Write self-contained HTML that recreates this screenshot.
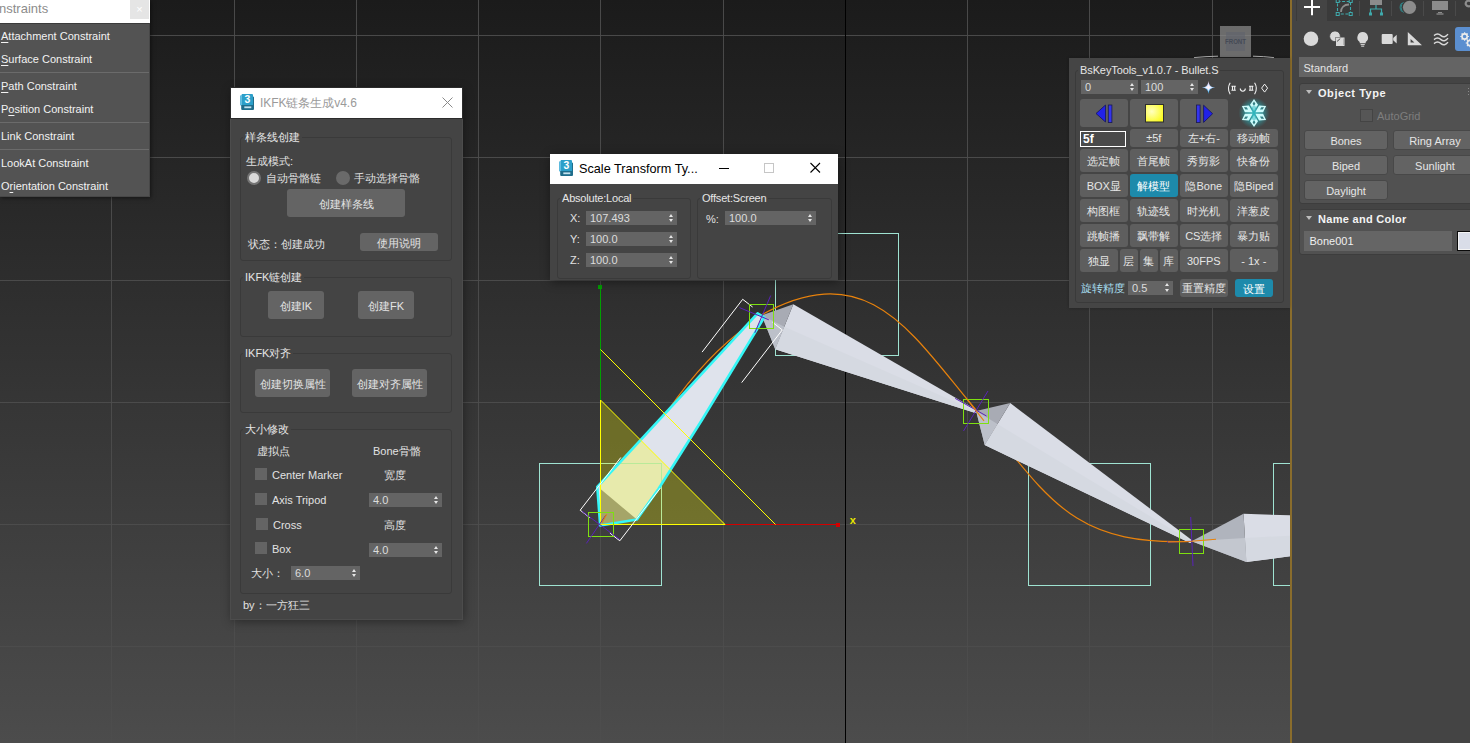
<!DOCTYPE html>
<html lang="en">
<head>
<meta charset="utf-8">
<title>3ds Max - IKFK</title>
<style>
html,body{margin:0;padding:0;}
body{width:1470px;height:743px;overflow:hidden;position:relative;background:#444444;font-family:"Liberation Sans",sans-serif;font-size:11px;color:#e2e2e2;}
*{box-sizing:border-box;}
.abs{position:absolute;}
#vp{position:absolute;left:0;top:0;width:1290px;height:743px;background:linear-gradient(to bottom,#1b1b1b 0%,#4c4c4c 100%);overflow:hidden;}
#vp svg{position:absolute;left:0;top:0;}
#goldline{position:absolute;left:1290px;top:0;width:2px;height:743px;background:#8a6d2c;}
/* ---------- generic widgets ---------- */
.t{position:absolute;white-space:nowrap;line-height:14px;height:14px;}
.btn{position:absolute;background:#646464;border-radius:3px;color:#e4e4e4;text-align:center;white-space:nowrap;}
.grp{position:absolute;border:1px solid #3a3a3a;border-radius:3px;}
.grp>.gt{position:absolute;top:-8px;left:2px;background:#444444;padding:0 2px;line-height:14px;height:14px;white-space:nowrap;color:#e6e6e6;}
.spin{position:absolute;background:#646464;color:#dcdcdc;height:14px;line-height:14px;padding-left:4px;white-space:nowrap;}
.spin:before{content:"";position:absolute;right:3.6px;top:2.6px;border-left:2.8px solid transparent;border-right:2.8px solid transparent;border-bottom:3.4px solid #e6e6e6;}
.spin:after{content:"";position:absolute;right:3.6px;bottom:2.6px;border-left:2.8px solid transparent;border-right:2.8px solid transparent;border-top:3.4px solid #e6e6e6;}
.chk{position:absolute;width:12px;height:12px;background:#646464;}
/* ---------- windows ---------- */
.win{position:absolute;background:#444444;box-shadow:1px 2px 10px 0 rgba(0,0,0,.42);}
.win .tb{position:absolute;left:0;top:0;right:0;background:#ffffff;}

/* constraints menu */
#cm{position:absolute;left:0;top:0;width:150px;height:197px;box-shadow:1px 1px 4px rgba(0,0,0,.5);}
#cm .tb{position:absolute;left:0;top:0;width:150px;height:23px;background:#fff;}
#cm .tb .ti{position:absolute;left:-1px;top:1px;font-size:13px;line-height:15px;color:#8c8c8c;white-space:nowrap;}
#cm .tb .cl{position:absolute;left:130px;top:0;width:19px;height:19px;background:#e5e5e5;color:#fff;font-size:11px;line-height:18px;text-align:center;}
#cm .bd{position:absolute;left:0;top:23px;width:150px;height:174px;background:#535353;border-top:1px solid #3b3b3b;border-right:1px solid #474747;border-bottom:1px solid #474747;}
#cm .it{position:absolute;left:1px;height:14px;line-height:14px;font-size:11px;color:#f2f2f2;white-space:nowrap;}
#cm .it u{text-decoration:underline;text-underline-offset:1.5px;}
#cm .sp{position:absolute;left:0;width:149px;height:1px;background:#6b6b6b;}
/* IKFK window */
#ik{left:231px;top:88px;width:231px;height:531px;outline:1px solid #4c4c4c;}
#ik .tb{outline:1px solid #2c2c2c;}
#ik .tb{height:30px;}
#ik .ttl{position:absolute;left:29px;top:7px;font-size:12px;letter-spacing:-0.05px;line-height:16px;color:#9a9a9a;white-space:nowrap;}
.ico3{position:absolute;width:14px;height:16px;}
.cj{font-size:11px;}
.radio{position:absolute;width:14px;height:14px;border-radius:50%;background:#6a6a6a;}
.radio.on{background:#dadada;border:2.5px solid #747474;}

/* Scale transform */
#st{left:550px;top:154px;width:288px;height:126px;}
#st .tb{height:30px;}
#st .ttl{position:absolute;left:29px;top:7px;font-size:12.7px;line-height:16px;color:#000;white-space:nowrap;}
/* BsKeyTools */
#bk{position:absolute;left:1069px;top:58px;width:221px;height:250px;background:#454545;box-shadow:0 0 3px 0 rgba(0,0,0,.25);}
#bk .grp>.gt{background:#454545;}
#bk .b{position:absolute;background:#5e5e5e;border-radius:3px;color:#e6e6e6;text-align:center;white-space:nowrap;font-size:11px;height:22.5px;line-height:24px;width:47.6px;}
#bk .b.teal{background:#1d8aab;color:#fff;}
/* Command panel */
#cp{position:absolute;left:1292px;top:0;width:178px;height:743px;background:#444444;overflow:hidden;}
#cp .roll{position:absolute;left:7px;width:180px;background:#515151;border-radius:3px;border:1px solid #3d3d3d;}
#cp .rh{position:absolute;left:18px;font-weight:700;font-size:11px;line-height:14px;color:#f4f4f4;white-space:nowrap;}
#cp .tri{position:absolute;left:4px;width:0;height:0;border-left:3px solid transparent;border-right:3px solid transparent;border-top:4.5px solid #bdbdbd;}
#cp .pb{position:absolute;background:#636363;border:1px solid #484848;border-radius:3px;height:20px;line-height:20.5px;text-align:center;color:#e6e6e6;font-size:11px;white-space:nowrap;}
</style>
</head>
<body>

<!-- ======================= VIEWPORT ======================= -->
<div id="vp">
<svg width="1290" height="743" viewBox="0 0 1290 743" shape-rendering="auto">
  <!-- grid -->
  <g stroke="#4d4d4d" stroke-opacity="0.92" stroke-width="1" shape-rendering="crispEdges">
    <line x1="111.5" y1="0" x2="111.5" y2="743"/>
    <line x1="234.5" y1="0" x2="234.5" y2="743"/>
    <line x1="356.5" y1="0" x2="356.5" y2="743"/>
    <line x1="478.5" y1="0" x2="478.5" y2="743"/>
    <line x1="600.5" y1="0" x2="600.5" y2="743"/>
    <line x1="723.5" y1="0" x2="723.5" y2="743"/>
    <line x1="967.5" y1="0" x2="967.5" y2="743"/>
    <line x1="1089.5" y1="0" x2="1089.5" y2="743"/>
    <line x1="1212.5" y1="0" x2="1212.5" y2="743"/>
    <line x1="0" y1="35.5" x2="1290" y2="35.5"/>
    <line x1="0" y1="157.5" x2="1290" y2="157.5"/>
    <line x1="0" y1="280.5" x2="1290" y2="280.5"/>
    <line x1="0" y1="402.5" x2="1290" y2="402.5"/>
    <line x1="0" y1="524.5" x2="1290" y2="524.5"/>
    <line x1="0" y1="646.5" x2="1290" y2="646.5"/>
  </g>
  <line x1="845.5" y1="0" x2="845.5" y2="743" stroke="#000" stroke-width="1" shape-rendering="crispEdges"/>

  <!-- view cube -->
  <rect x="1220" y="26" width="31" height="31" fill="#8a8a8a" fill-opacity="0.72"/>
  <rect x="1226" y="32" width="19" height="19" fill="#5f636c" fill-opacity="0.6"/>
  <text x="1235.5" y="44" font-family="Liberation Sans, sans-serif" font-size="6.5" font-weight="700" fill="#454a55" text-anchor="middle" textLength="21" lengthAdjust="spacingAndGlyphs">FRONT</text>

  <path d="M1194,57.6 Q1206,56.4 1218,56.2 M1253,56.2 Q1264,56.4 1274,57.6" stroke="#b0b0b0" stroke-width="1" fill="none"/>
  <!-- helper squares (teal) -->
  <g fill="none" stroke="#9fe3d2" stroke-width="1" shape-rendering="crispEdges">
    <rect x="775.5" y="233.5" width="123" height="122"/>
    <rect x="1028.5" y="463.5" width="122" height="122"/>
    <rect x="1273.5" y="463.5" width="122" height="122"/>
  </g>

  <!-- spline (orange) -->
  <g fill="none" stroke="#e8820c" stroke-width="1.2">
    <path d="M600.5,524.5 C645.3,446.2 683.6,366.0 761.5,316.2"/>
    <path d="M761.7,314.8 C869.3,255.0 912.6,335.1 977.0,411.2"/>
    <path d="M977.0,411.2 C1048.8,497.4 1069.9,545.8 1191.6,541.3 L1216,539.3"/>
  </g>

  <!-- bone 2 -->
  <polygon points="793.3,304.3 775.2,349.3 975.4,413.0 977.2,411.4 976.4,409.8" fill="#dadde6"/>
  <polygon points="784.3,326.8 775.2,349.3 975.4,413.0 977,411.4" fill="#d5d9e1"/>
  <polygon points="761.7,315.3 793.3,304.3 775.2,349.3" fill="#a8abb4"/>
  <polygon points="761.7,315.3 784.3,326.8 775.2,349.3" fill="#bcc0c9"/>
  <!-- bone 3 -->
  <polygon points="1010.2,403.1 984.7,445.1 1190.2,542.9 1191.9,541.4 1191.4,539.8" fill="#dadde6"/>
  <polygon points="997.5,424.1 984.7,445.1 1190.2,542.9 1191.7,541.4" fill="#d5d9e1"/>
  <polygon points="976.1,411.1 1010.2,403.1 984.7,445.1" fill="#a8abb4"/>
  <polygon points="976.1,411.1 997.5,424.1 984.7,445.1" fill="#bcc0c9"/>
  <!-- bone 4 -->
  <polygon points="1243.5,513.8 1246.4,562.1 1290,556.2 1290,515.3" fill="#dadde6"/>
  <polygon points="1245,538 1246.4,562.1 1290,556.2 1290,535.7" fill="#d5d9e1"/>
  <polygon points="1191.6,541.3 1243.5,513.8 1246.4,562.1" fill="#b0b4bd"/>
  <polygon points="1191.6,541.3 1245,538 1246.4,562.1" fill="#c3c7cf"/>

  <!-- bone 1 (selected) -->
  <polygon points="600.2,525.5 597.3,486.9 757.6,313.4 764.2,317.4 701.9,420 658.6,488.8 636.9,519.5" fill="#dfe3ec"/>
  <polygon points="600.5,489 636.9,519.5 600.2,525.5" fill="#84848f"/>
  <rect x="539.5" y="463.5" width="122" height="122" fill="none" stroke="#9fe3d2" stroke-width="1" shape-rendering="crispEdges"/>
  <!-- scale gizmo plane -->
  <polygon points="600.5,400 600.5,524.2 725,524.2" fill="#ffff00" fill-opacity="0.27"/>
  <polygon points="600.2,525.5 597.3,486.9 757.6,313.4 764.2,317.4 701.9,420 658.6,488.8 636.9,519.5" fill="none" stroke="#35f6f6" stroke-width="2.6" stroke-linejoin="round"/>
  <!-- gizmo lines -->
  <g stroke-width="1" shape-rendering="crispEdges" fill="none">
    <line x1="600.5" y1="287" x2="600.5" y2="400" stroke="#00a000"/>
    <line x1="600.5" y1="400" x2="600.5" y2="524.5" stroke="#ffff00"/>
    <line x1="600.5" y1="524.5" x2="725" y2="524.5" stroke="#ffff00"/>
    <line x1="725" y1="524.5" x2="838" y2="524.5" stroke="#d40000"/>
  </g>
  <g stroke="#ffff00" stroke-width="1" fill="none">
    <line x1="600.5" y1="400" x2="725" y2="524.5"/>
    <line x1="600.5" y1="349.5" x2="775.5" y2="524.5"/>
  </g>
  <rect x="598" y="285" width="4" height="4" fill="#00a000"/>
  <rect x="836" y="523" width="4" height="4" fill="#d40000"/>
  <text x="849.8" y="524.2" font-family="Liberation Sans, sans-serif" font-size="11" font-weight="700" fill="#e6e600">x</text>

  <!-- selection brackets -->
  <g fill="none" stroke="#ffffff" stroke-width="1">
    <polyline points="620.8,457.5 580.2,510.2 590.1,517.9"/>
    <polyline points="660.4,488.0 619.8,540.8 609.9,533.1"/>
    <polyline points="702.1,352.1 742.7,299.3 752.6,307.0"/>
    <polyline points="741.7,382.6 782.3,329.9 772.4,322.2"/>
  </g>

  <!-- joint markers -->
  <g fill="none" stroke="#7ee010" stroke-width="1.4" shape-rendering="crispEdges">
    <rect x="588.5" y="512.5" width="25" height="24"/>
    <rect x="749.5" y="304.5" width="24" height="24"/>
    <rect x="963.5" y="399.5" width="25" height="24"/>
    <rect x="1179.5" y="529.5" width="24" height="24"/>
  </g>
  <g fill="none" stroke="#5a22b8" stroke-width="1">
    <line x1="582.3" y1="511.4" x2="620" y2="539.7"/>
    <line x1="586.4" y1="543.4" x2="605.8" y2="515.2"/>
    <line x1="739.5" y1="307.6" x2="768.8" y2="319.8"/>
    <line x1="770.7" y1="295.5" x2="754.8" y2="332.8"/>
    <line x1="955.2" y1="398.4" x2="986.5" y2="416"/>
    <line x1="988" y1="391" x2="963.5" y2="431"/>
    <line x1="1190.7" y1="517" x2="1193" y2="566"/>
    <line x1="1167" y1="542" x2="1192" y2="541.3"/>
  </g>
  <g fill="none" stroke="#e8820c" stroke-width="1.1">
    <line x1="602" y1="522.7" x2="606.7" y2="514.2"/>
    <line x1="966" y1="398" x2="984" y2="420.9"/>
    <path d="M1168,541.9 L1191.6,541.3 L1216,539.3"/>
  </g>
</svg>
</div>
<div id="goldline"></div>


<!-- ======================= CONSTRAINTS MENU ======================= -->
<div id="cm">
  <div class="bd"></div>
  <div class="tb"><div class="ti">nstraints</div><div class="cl">&#215;</div></div>
  <div class="it" style="top:29px"><u>A</u>ttachment Constraint</div>
  <div class="it" style="top:52px"><u>S</u>urface Constraint</div>
  <div class="sp" style="top:72px"></div>
  <div class="it" style="top:79px"><u>P</u>ath Constraint</div>
  <div class="it" style="top:102px">P<u>o</u>sition Constraint</div>
  <div class="sp" style="top:122px"></div>
  <div class="it" style="top:129px">Link Constraint</div>
  <div class="sp" style="top:149px"></div>
  <div class="it" style="top:156px">LookAt Constraint</div>
  <div class="it" style="top:179px">O<u>r</u>ientation Constraint</div>
</div>

<!-- ======================= IKFK WINDOW ======================= -->
<div id="ik" class="win">
  <div class="tb">
    <svg class="ico3" style="left:9px;top:6px" viewBox="0 0 14 16"><path d="M1.9,0.5 L0,1.7 V11.2 L1.9,11.7 Z" fill="#5dbade"/><path d="M13,2.3 L14,3.2 V15 Q14,16 13,16 H2.2 Q1.2,16 1.2,15 V11 H13 Z" fill="#1f6d8b"/><path d="M1.9,0 H12 Q13,0 13,1 V11 H1.9 Z" fill="#2c9fc9"/><text x="7.5" y="9.3" font-family="Liberation Sans, sans-serif" font-weight="700" font-size="10.4" fill="#fff" text-anchor="middle">3</text><rect x="4.3" y="12.4" width="7" height="1.8" fill="#c4e2ee"/></svg>
    <div class="ttl">IKFK链条生成v4.6</div>
    <svg style="position:absolute;left:211px;top:9px" width="11" height="11" viewBox="0 0 11 11"><path d="M0.5,0.5 L10.5,10.5 M10.5,0.5 L0.5,10.5" stroke="#8a8a8a" stroke-width="1" fill="none"/></svg>
  </div>
  <!-- group 1 -->
  <div class="grp" style="left:9px;top:49px;width:212px;height:124px"><div class="gt cj">样条线创建</div></div>
  <div class="t cj" style="left:15px;top:66px">生成模式:</div>
  <div class="radio on" style="left:15.8px;top:83.3px"></div>
  <div class="t cj" style="left:35px;top:83px">自动骨骼链</div>
  <div class="radio" style="left:104.5px;top:83.3px"></div>
  <div class="t cj" style="left:123px;top:83px">手动选择骨骼</div>
  <div class="btn cj" style="left:56px;top:101px;width:118px;height:28px;line-height:30px">创建样条线</div>
  <div class="t cj" style="left:17px;top:149px">状态：创建成功</div>
  <div class="btn cj" style="left:129px;top:145px;width:78px;height:18px;line-height:20.5px">使用说明</div>
  <!-- group 2 -->
  <div class="grp" style="left:9px;top:189px;width:212px;height:60px"><div class="gt cj">IKFK链创建</div></div>
  <div class="btn cj" style="left:37px;top:203px;width:56px;height:28px;line-height:30px">创建IK</div>
  <div class="btn cj" style="left:127px;top:203px;width:56px;height:28px;line-height:30px">创建FK</div>
  <!-- group 3 -->
  <div class="grp" style="left:9px;top:265px;width:212px;height:60px"><div class="gt cj">IKFK对齐</div></div>
  <div class="btn cj" style="left:24px;top:281px;width:75px;height:28px;line-height:30px">创建切换属性</div>
  <div class="btn cj" style="left:121px;top:281px;width:75px;height:28px;line-height:30px">创建对齐属性</div>
  <!-- group 4 -->
  <div class="grp" style="left:9px;top:341px;width:212px;height:165px"><div class="gt cj">大小修改</div></div>
  <div class="t cj" style="left:26px;top:356px">虚拟点</div>
  <div class="t cj" style="left:142px;top:356px">Bone骨骼</div>
  <div class="chk" style="left:24px;top:380px"></div><div class="t" style="left:41px;top:380px">Center Marker</div>
  <div class="t cj" style="left:153px;top:380px">宽度</div>
  <div class="chk" style="left:24px;top:405px"></div><div class="t" style="left:41px;top:405px">Axis Tripod</div>
  <div class="spin" style="left:138px;top:405px;width:73px">4.0</div>
  <div class="chk" style="left:25px;top:430px"></div><div class="t" style="left:42px;top:430px">Cross</div>
  <div class="t cj" style="left:153px;top:430px">高度</div>
  <div class="chk" style="left:24px;top:454px"></div><div class="t" style="left:41px;top:454px">Box</div>
  <div class="spin" style="left:138px;top:455px;width:73px">4.0</div>
  <div class="t cj" style="left:20px;top:478px">大小：</div>
  <div class="spin" style="left:60px;top:478px;width:69px">6.0</div>
  <div class="t cj" style="left:12px;top:510px">by：一方狂三</div>
</div>

<!-- ======================= SCALE TRANSFORM TYPE-IN ======================= -->
<div id="st" class="win">
  <div class="tb">
    <svg class="ico3" style="left:9px;top:6px" viewBox="0 0 14 16"><path d="M1.9,0.5 L0,1.7 V11.2 L1.9,11.7 Z" fill="#5dbade"/><path d="M13,2.3 L14,3.2 V15 Q14,16 13,16 H2.2 Q1.2,16 1.2,15 V11 H13 Z" fill="#1f6d8b"/><path d="M1.9,0 H12 Q13,0 13,1 V11 H1.9 Z" fill="#2c9fc9"/><text x="7.5" y="9.3" font-family="Liberation Sans, sans-serif" font-weight="700" font-size="10.4" fill="#fff" text-anchor="middle">3</text><rect x="4.3" y="12.4" width="7" height="1.8" fill="#c4e2ee"/></svg>
    <div class="ttl">Scale Transform Ty...</div>
    <svg style="position:absolute;left:168px;top:8px" width="104" height="12" viewBox="0 0 104 12"><path d="M1,6.5 H11" stroke="#000" stroke-width="1" fill="none"/><rect x="46.5" y="1.5" width="9" height="9" stroke="#c6c6c6" stroke-width="1" fill="none"/><path d="M92.5,1 L102,10.5 M102,1 L92.5,10.5" stroke="#000" stroke-width="1.1" fill="none"/></svg>
  </div>
  <div class="grp" style="left:7px;top:44px;width:134px;height:81px"><div class="gt" style="letter-spacing:-0.2px">Absolute:Local</div></div>
  <div class="t" style="left:20px;top:57px">X:</div><div class="spin" style="left:36px;top:57px;width:91px">107.493</div>
  <div class="t" style="left:20px;top:78px">Y:</div><div class="spin" style="left:36px;top:78px;width:91px">100.0</div>
  <div class="t" style="left:20px;top:99px">Z:</div><div class="spin" style="left:36px;top:99px;width:91px">100.0</div>
  <div class="grp" style="left:147px;top:44px;width:135px;height:81px"><div class="gt" style="letter-spacing:-0.2px">Offset:Screen</div></div>
  <div class="t" style="left:156px;top:58px">%:</div><div class="spin" style="left:175px;top:57px;width:91px">100.0</div>
</div>

<!-- ======================= BsKeyTools ======================= -->
<div id="bk">
  <div class="grp" style="left:6px;top:12px;width:209px;height:233px"><div class="gt" style="letter-spacing:-0.1px">BsKeyTools_v1.0.7 - Bullet.S</div></div>
  <div class="spin" style="left:12px;top:22px;width:57px">0</div>
  <div class="spin" style="left:72px;top:22px;width:57px">100</div>
  <svg style="position:absolute;left:132.2px;top:21.5px" width="15" height="15" viewBox="-7.5 -7.5 15 15"><defs><linearGradient id="stg" x1="0" y1="0" x2="0" y2="1"><stop offset="0" stop-color="#ffd8f0"/><stop offset="0.5" stop-color="#9ccfff"/><stop offset="1" stop-color="#38b8ff"/></linearGradient></defs><path d="M0,-6.6 C0.45,-2.3 2.3,-0.45 6.6,0 C2.3,0.45 0.45,2.3 0,6.6 C-0.45,2.3 -2.3,0.45 -6.6,0 C-2.3,-0.45 -0.45,-2.3 0,-6.6Z" fill="url(#stg)"/><path d="M0,-4 C0.3,-1.5 1.5,-0.3 4,0 C1.5,0.3 0.3,1.5 0,4 C-0.3,1.5 -1.5,0.3 -4,0 C-1.5,-0.3 -0.3,-1.5 0,-4Z" fill="#fff4fb"/></svg>
  <svg style="position:absolute;left:156px;top:23px" width="46" height="14" viewBox="0 0 46 14" role="img" aria-label="(¤ ᴗ ¤)✧"><g fill="none" stroke="#f2f2f2" stroke-width="1.1"><path d="M5.2,1.8 Q1.6,7.5 5.2,13.2"/><path d="M6.4,5.2 H10.8 M6.4,9.2 H10.8 M7.5,5.2 V9.2 M9.7,5.2 V9.2"/><path d="M15.3,7.6 Q15.3,10.2 17.8,10.2 Q20.3,10.2 20.3,7.6"/><path d="M24,5.2 H28.4 M24,9.2 H28.4 M25.1,5.2 V9.2 M27.3,5.2 V9.2"/><path d="M29.6,1.8 Q33.2,7.5 29.6,13.2"/><path d="M39.6,3.1 L42.6,7.1 L39.6,11.1 L36.6,7.1 Z" stroke-width="1"/></g></svg>
  <!-- big buttons -->
  <div class="b" style="left:11px;top:41px;width:48px;height:28px"><svg width="48" height="28" viewBox="0 0 48 28"><path d="M16,14.5 L25.5,6 V23Z" fill="#2222e8" stroke="#14145a" stroke-width="0.8"/><rect x="28.3" y="6" width="3.6" height="17.6" fill="#3434ee" stroke="#1a1a50" stroke-width="0.8"/></svg></div>
  <div class="b" style="left:61px;top:41px;width:48px;height:28px"><svg width="48" height="28" viewBox="0 0 48 28"><defs><radialGradient id="yg" cx="0.35" cy="0.4" r="0.7"><stop offset="0" stop-color="#ffffc0"/><stop offset="1" stop-color="#fbfb20"/></radialGradient></defs><rect x="15.5" y="5.5" width="18" height="17.5" fill="url(#yg)" stroke="#2e2e2e" stroke-width="1"/></svg></div>
  <div class="b" style="left:111px;top:41px;width:48px;height:28px"><svg width="48" height="28" viewBox="0 0 48 28"><rect x="16.5" y="6" width="3.6" height="17.6" fill="#3434ee" stroke="#1a1a50" stroke-width="0.8"/><path d="M32.6,14.7 L23.6,6.2 V23.4Z" fill="#2222e8" stroke="#14145a" stroke-width="0.8"/></svg></div>
  <svg style="position:absolute;left:166.7px;top:37px" width="36" height="36" viewBox="-18 -18 36 36"><defs><radialGradient id="sg" cx="0.5" cy="0.5" r="0.5"><stop offset="0" stop-color="#38c4cc" stop-opacity="0.95"/><stop offset="0.55" stop-color="#2aa4ac" stop-opacity="0.7"/><stop offset="0.85" stop-color="#2aa0a8" stop-opacity="0.22"/><stop offset="1" stop-color="#2aa0a8" stop-opacity="0"/></radialGradient></defs><circle r="15.5" fill="url(#sg)"/><g fill="#cdfcfc" fill-rule="evenodd"><path d="M0,-14 L4,-8.2 L0,-1.5 L-4,-8.2 Z M0,-11.6 L-1.4,-9.2 L0,-6.9 L1.4,-9.2 Z" transform="rotate(0)"/><path d="M0,-14 L4,-8.2 L0,-1.5 L-4,-8.2 Z M0,-11.6 L-1.4,-9.2 L0,-6.9 L1.4,-9.2 Z" transform="rotate(60)"/><path d="M0,-14 L4,-8.2 L0,-1.5 L-4,-8.2 Z M0,-11.6 L-1.4,-9.2 L0,-6.9 L1.4,-9.2 Z" transform="rotate(120)"/><path d="M0,-14 L4,-8.2 L0,-1.5 L-4,-8.2 Z M0,-11.6 L-1.4,-9.2 L0,-6.9 L1.4,-9.2 Z" transform="rotate(180)"/><path d="M0,-14 L4,-8.2 L0,-1.5 L-4,-8.2 Z M0,-11.6 L-1.4,-9.2 L0,-6.9 L1.4,-9.2 Z" transform="rotate(240)"/><path d="M0,-14 L4,-8.2 L0,-1.5 L-4,-8.2 Z M0,-11.6 L-1.4,-9.2 L0,-6.9 L1.4,-9.2 Z" transform="rotate(300)"/></g><g stroke="#2fb4bc" stroke-width="0.7" fill="none"><path d="M-2.2,-6.5 L2.2,6.5 M2.2,-6.5 L-2.2,6.5 M-0.8,-7 L-0.8,7 M0.8,-7 L0.8,7"/></g></svg>
  <!-- row 3 -->
  <div class="abs" style="left:11px;top:73px;width:46px;height:15.5px;background:#4a4a4a;border:1.5px solid #fff;color:#fff;font-weight:700;font-size:12px;line-height:15px;padding-left:2px">5f</div>
  <div class="b" style="left:61px;top:71px;height:17.5px;line-height:18px">&#177;5f</div>
  <div class="b" style="left:111px;top:71px;height:17.5px;line-height:18px">左+右-</div>
  <div class="b" style="left:161px;top:71px;height:17.5px;line-height:18px">移动帧</div>
  <!-- row 4 -->
  <div class="b" style="left:11px;top:91.3px">选定帧</div><div class="b" style="left:61px;top:91.3px">首尾帧</div><div class="b" style="left:111px;top:91.3px">秀剪影</div><div class="b" style="left:161px;top:91.3px">快备份</div>
  <!-- row 5 -->
  <div class="b" style="left:11px;top:116.3px">BOX显</div><div class="b teal" style="left:61px;top:116.3px">解模型</div><div class="b" style="left:111px;top:116.3px">隐Bone</div><div class="b" style="left:161px;top:116.3px">隐Biped</div>
  <!-- row 6 -->
  <div class="b" style="left:11px;top:141.3px">构图框</div><div class="b" style="left:61px;top:141.3px">轨迹线</div><div class="b" style="left:111px;top:141.3px">时光机</div><div class="b" style="left:161px;top:141.3px">洋葱皮</div>
  <!-- row 7 -->
  <div class="b" style="left:11px;top:166.2px">跳帧播</div><div class="b" style="left:61px;top:166.2px">飘带解</div><div class="b" style="left:111px;top:166.2px">CS选择</div><div class="b" style="left:161px;top:166.2px">暴力贴</div>
  <!-- row 8 -->
  <div class="b" style="left:11px;top:191px;width:37.6px">独显</div><div class="b" style="left:51px;top:191px;width:17.6px">层</div><div class="b" style="left:71px;top:191px;width:17.6px">集</div><div class="b" style="left:91px;top:191px;width:17.6px">库</div><div class="b" style="left:111px;top:191px">30FPS</div><div class="b" style="left:161px;top:191px">- 1x -</div>
  <!-- row 9 -->
  <div class="t cj" style="left:12px;top:223px;color:#a6dcee">旋转精度</div>
  <div class="spin" style="left:59px;top:222.6px;width:45px">0.5</div>
  <div class="b" style="left:111px;top:221px;height:18px;line-height:18px">重置精度</div>
  <div class="b teal" style="left:166px;top:221px;width:38px;height:18px;line-height:20.5px">设置</div>
</div>

<!-- ======================= COMMAND PANEL ======================= -->
<div id="cp">
  <!-- tab row -->
  <div class="abs" style="left:35px;top:0;width:160px;height:21px;background:#3a3a3a"></div>
  <div class="abs" style="left:4px;top:0;width:1px;height:21px;background:#3a3a3a"></div>
  <div class="abs" style="left:67px;top:1px;width:1px;height:15px;background:#4a4a4a"></div>
  <div class="abs" style="left:99px;top:1px;width:1px;height:15px;background:#4a4a4a"></div>
  <div class="abs" style="left:131px;top:1px;width:1px;height:15px;background:#4a4a4a"></div>
  <div class="abs" style="left:163px;top:1px;width:1px;height:15px;background:#4a4a4a"></div>
  <svg class="abs" style="left:0;top:0" width="178" height="56" viewBox="0 0 178 56">
    <!-- create + -->
    <path d="M12,7 H28 M20,-1 V15.3" stroke="#fff" stroke-width="2" fill="none"/>
    <!-- modify -->
    <g fill="none" stroke="#3fa9ab" stroke-width="1.1"><path d="M45.5,1.5 H58.5 V14 H45.5 Z" stroke-dasharray="3 1.6"/></g>
    <g fill="#3a3a3a" stroke="#3fa9ab" stroke-width="1"><rect x="44.2" y="-0.5" width="3" height="3"/><rect x="57.2" y="-0.5" width="3" height="3"/><rect x="44.2" y="12.5" width="3" height="3"/><rect x="57.2" y="12.5" width="3" height="3"/></g>
    <path d="M49,12 C49,7.5 52,4.5 57,4.5" stroke="#8c8c8c" stroke-width="1.8" fill="none"/>
    <!-- hierarchy -->
    <rect x="78" y="-1" width="12" height="6" fill="#8c8c8c"/>
    <path d="M84,5 V9 M78.5,13 V9 H89.5 V13" stroke="#3fa9ab" stroke-width="1.2" fill="none"/>
    <rect x="77" y="12.5" width="3" height="3" fill="#3fa9ab"/><rect x="88" y="12.5" width="3" height="3" fill="#3fa9ab"/>
    <!-- motion -->
    <circle cx="117.5" cy="7.3" r="6.6" fill="#8c8c8c"/>
    <path d="M111.5,2 A7 7 0 0 0 111.5,12.6 M109.7,3 A6.5 6.5 0 0 0 109.7,11.6" stroke="#2f8f92" stroke-width="0.9" fill="none"/>
    <!-- display -->
    <rect x="140" y="1" width="16" height="9" fill="#8c8c8c"/><path d="M144.5,14 H151.5" stroke="#8c8c8c" stroke-width="1.3"/><path d="M146,12.5 h4" stroke="#8c8c8c" stroke-width="1"/>
    <!-- utilities (wrench partially) -->
    <path d="M178.5,1.2 a3,3 0 0 0 -4.6,3.4 q1.6,2.6 4.8,1.4" stroke="#8c8c8c" stroke-width="2.2" fill="none"/>

    <!-- second row -->
    <circle cx="19" cy="38.8" r="7.3" fill="#d9d9d9"/>
    <circle cx="43" cy="36.3" r="5.4" fill="#d9d9d9"/><rect x="44" y="37.5" width="8" height="8" fill="#d9d9d9" stroke="#444" stroke-width="1"/><circle cx="43" cy="36.3" r="5.4" fill="none" stroke="#444" stroke-width="0.9"/><rect x="44.5" y="38" width="7.5" height="7.5" fill="none" stroke="#d9d9d9" stroke-width="1"/>
    <path d="M70.7,32 a5.5,5.5 0 0 1 3,10 v1.2 h-6 v-1.2 a5.5,5.5 0 0 1 3,-10z" fill="#d9d9d9"/><path d="M68.6,44.6 h4.2 M69.2,46.2 h3" stroke="#d9d9d9" stroke-width="1"/>
    <rect x="89.7" y="34" width="11" height="10" rx="1" fill="#d9d9d9"/><path d="M101.2,38 L104.7,34.8 V43.4 L101.2,40.2Z" fill="#d9d9d9"/>
    <path d="M115.8,32 V45.3 H130 Z M118.6,39 V42.6 H122.4Z" fill="#d9d9d9" fill-rule="evenodd"/>
    <g stroke="#d9d9d9" stroke-width="1.4" fill="none"><path d="M142,35.6 q3.5,-3 7,0 t7,-1.5"/><path d="M142,39.6 q3.5,-3 7,0 t7,-1.5"/><path d="M142,43.6 q3.5,-3 7,0 t7,-1.5"/></g>
    <rect x="163" y="27" width="20" height="24" rx="3" fill="#5b8fd0"/>
    <g fill="none" stroke="#ececec" stroke-width="1.6"><circle cx="172.6" cy="36.5" r="2.6"/><circle cx="178" cy="43" r="2.6"/></g>
    <g stroke="#ececec" stroke-width="1.2"><path d="M172.6,32.2 v1.4 M172.6,39.4 v1.4 M168.3,36.5 h1.4 M175.5,36.5 h1.4 M169.6,33.5 l1,1 M174.6,38.5 l1,1 M169.6,39.5 l1,-1 M174.6,34.5 l1,-1"/><path d="M178,38.7 v1.4 M178,45.9 v1.4 M173.7,43 h1.4 M175,40 l1,1 M175,46 l1,-1"/></g>
  </svg>
  <!-- dropdown -->
  <div class="abs" style="left:7px;top:57px;width:180px;height:20px;background:#646464;color:#e4e4e4;line-height:22px;padding-left:4.5px;font-size:11px">Standard</div>
  <!-- Object Type rollout -->
  <div class="roll" style="top:83px;height:121px"></div>
  <div class="tri" style="left:13.5px;top:90.3px"></div>
  <div class="rh" style="left:26px;top:86px;letter-spacing:0.55px">Object Type</div>
  <div class="abs" style="left:67.5px;top:108.5px;width:13px;height:13px;background:#565656;border:1px solid #444"></div>
  <div class="t" style="left:85px;top:109px;color:#7e7e7e">AutoGrid</div>
  <div class="pb" style="left:12px;top:130px;width:84px">Bones</div>
  <div class="pb" style="left:101px;top:130px;width:84px">Ring Array</div>
  <div class="pb" style="left:12px;top:155px;width:84px">Biped</div>
  <div class="pb" style="left:101px;top:155px;width:84px">Sunlight</div>
  <div class="pb" style="left:12px;top:180px;width:84px">Daylight</div>
  <div class="abs" style="left:176px;top:88px;width:1px;height:1px;background:#8a8a8a;box-shadow:0 3px 0 #8a8a8a,0 6px 0 #8a8a8a"></div>
  <div class="abs" style="left:176px;top:214px;width:1px;height:1px;background:#8a8a8a;box-shadow:0 3px 0 #8a8a8a,0 6px 0 #8a8a8a"></div>
  <!-- Name and Color rollout -->
  <div class="roll" style="top:209px;height:46px"></div>
  <div class="tri" style="left:13.5px;top:216.3px"></div>
  <div class="rh" style="left:26px;top:212px;letter-spacing:0.3px">Name and Color</div>
  <div class="abs" style="left:12px;top:231px;width:148px;height:20px;background:#656565;color:#f0f0f0;line-height:21.5px;padding-left:5.5px;font-size:11px">Bone001</div>
  <div class="abs" style="left:165px;top:231px;width:20px;height:20px;background:#d9dde8;border:1px solid #0a0a0a;box-shadow:inset 0 0 0 1px #f4f4f4"></div>
</div>
</body>
</html>
